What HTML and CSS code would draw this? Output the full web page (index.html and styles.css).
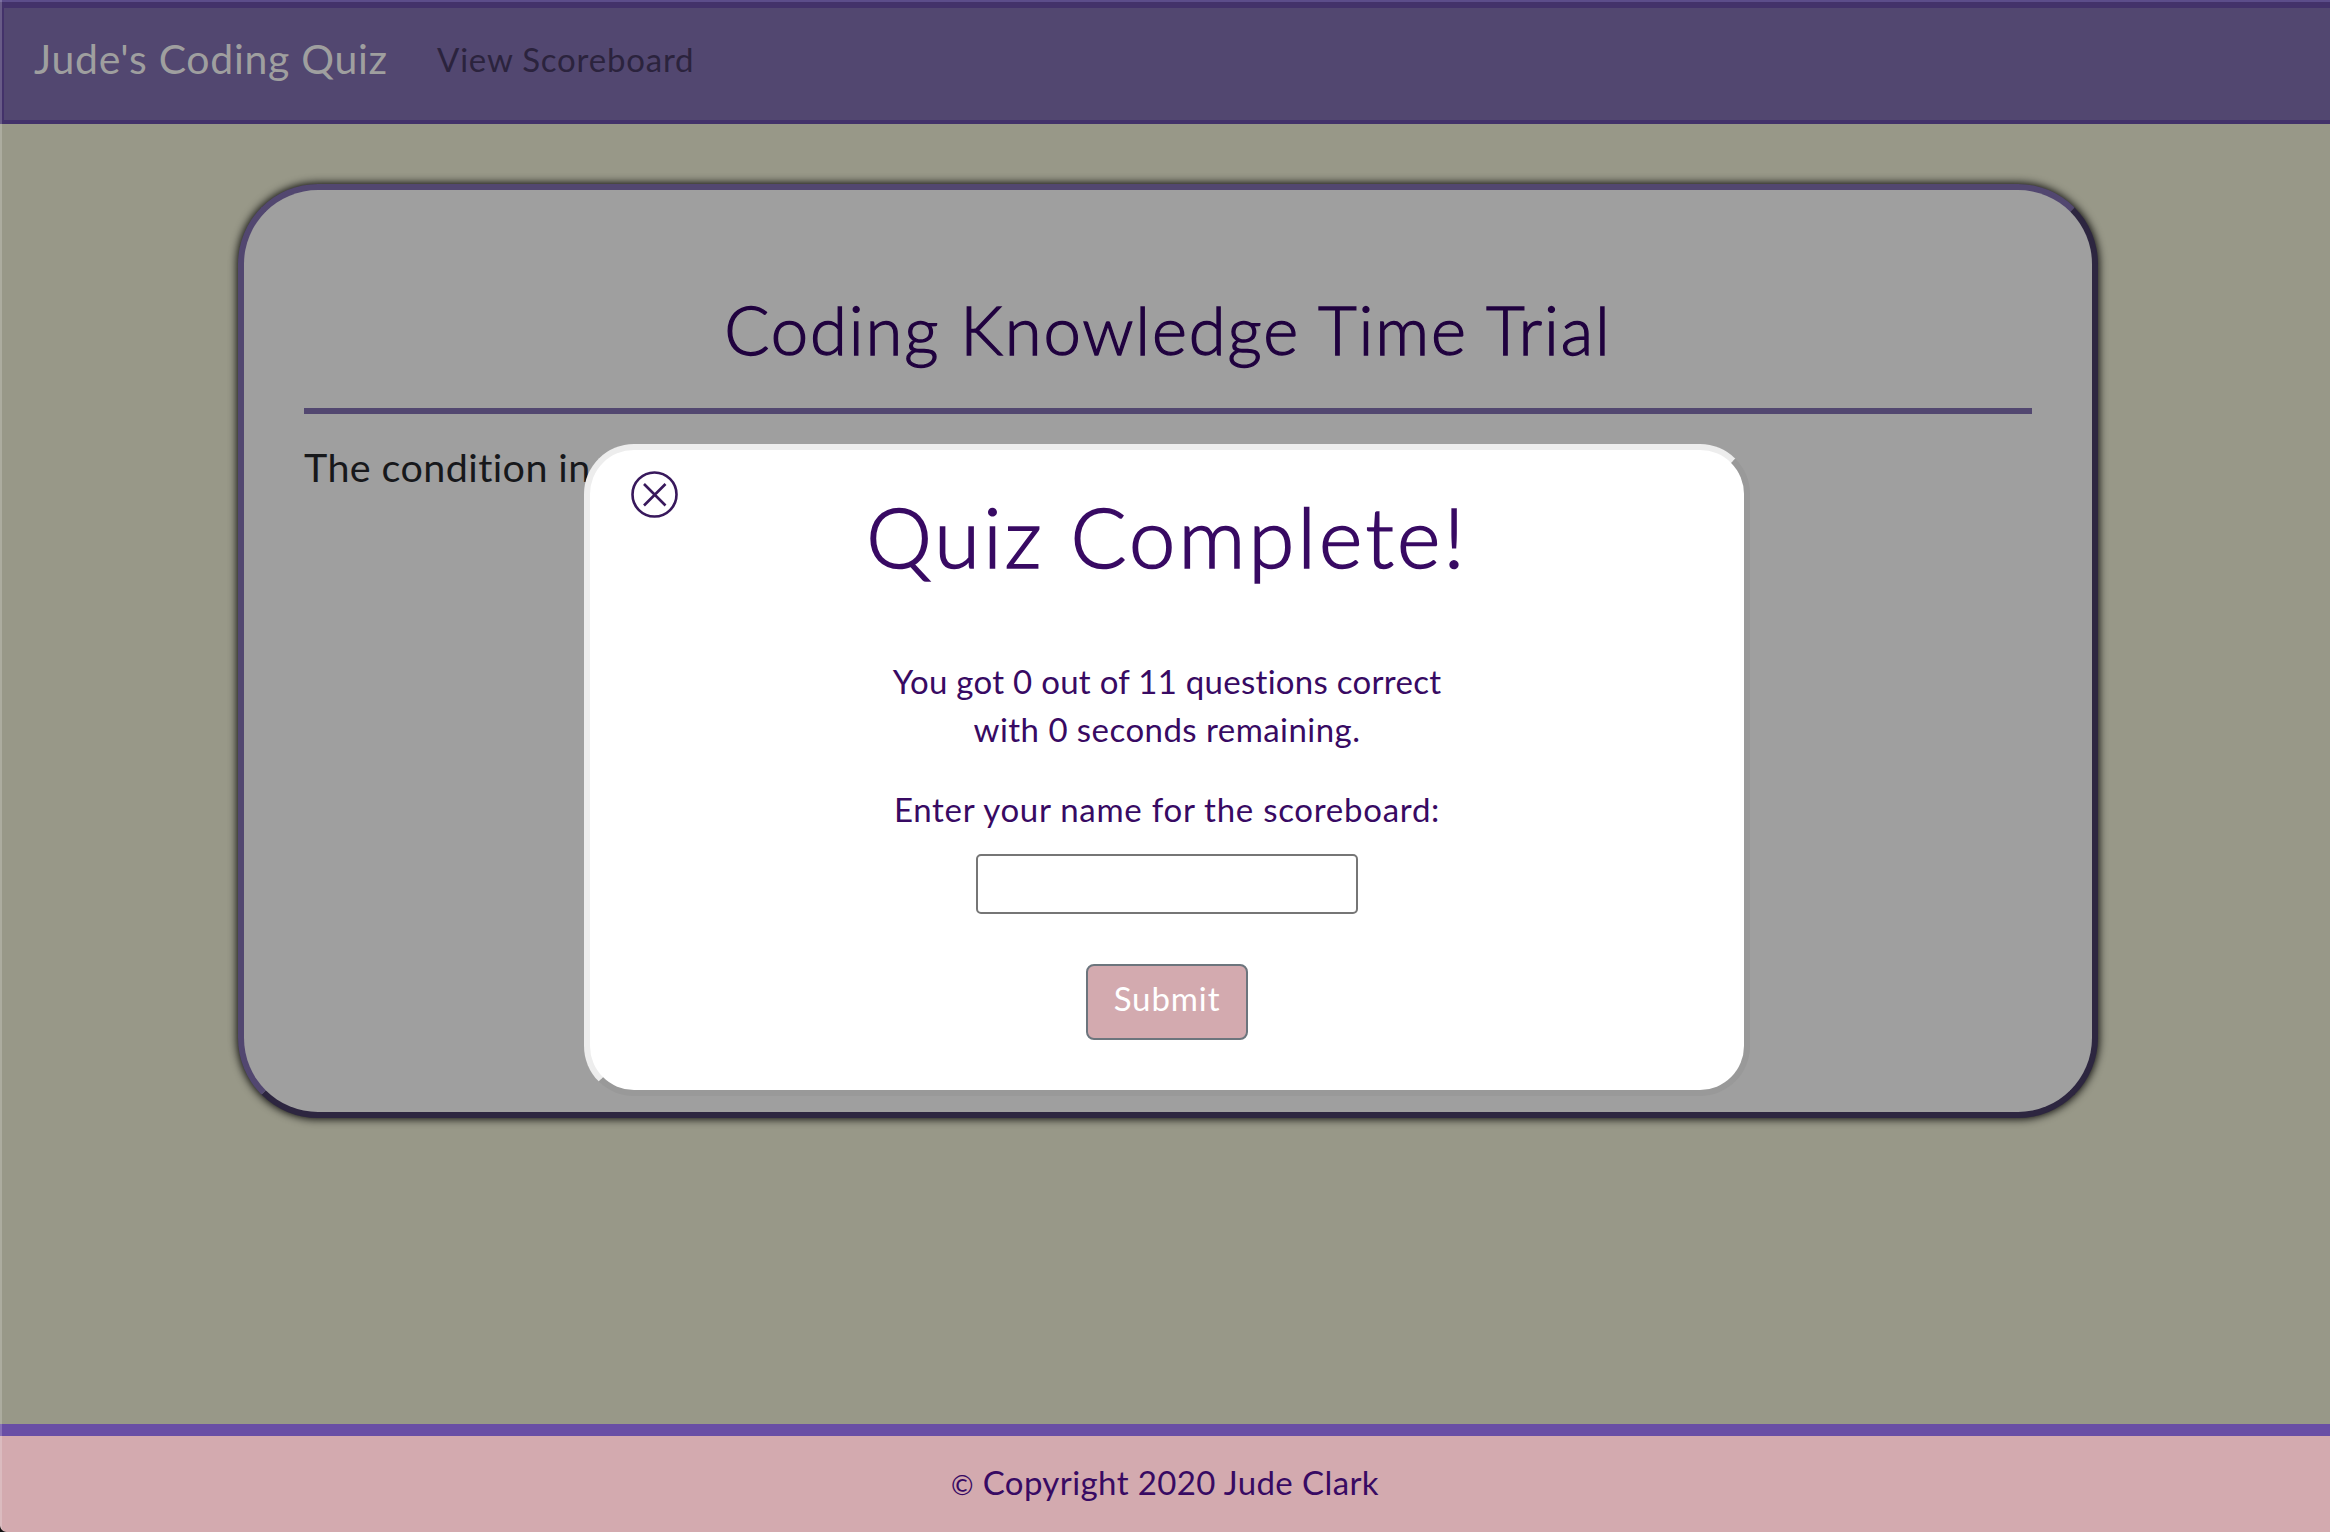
FILE: index.html
```html
<!DOCTYPE html>
<html lang="en">
<head>
<meta charset="utf-8">
<title>Jude's Coding Quiz</title>
<link rel="stylesheet" href="styles.css">
</head>
<body>
<header class="navbar">
  <a class="brand">Jude's Coding Quiz</a>
  <a class="nav-link">View Scoreboard</a>
</header>
<main class="page">
  <section class="card">
    <h1 class="card-title">Coding Knowledge Time Trial</h1>
    <hr class="rule">
    <p class="question">The condition in</p>
  </section>
</main>
<footer class="footer"><span class="copy-sign">©</span> Copyright 2020 Jude Clark</footer>
<div class="modal" role="dialog">
  <svg class="close" viewBox="0 0 48 48" aria-label="Close">
    <circle cx="23.5" cy="23.5" r="22" />
    <path d="M13 13 34.500 34.500M34.500 13 13 34.500" />
  </svg>
  <h2 class="modal-title">Quiz Complete!</h2>
  <p class="result">You got 0 out of 11 questions correct<br><span class="result-time">with 0 seconds remaining.</span></p>
  <label class="name-label" for="name">Enter your name for the scoreboard:</label>
  <input class="name-input" id="name" type="text">
  <button class="submit" type="button">Submit</button>
</div>
</body>
</html>
```
FILE: styles.css
```css
* { box-sizing: border-box; }

body {
  margin: 0;
  height: 1532px;
  display: flex;
  flex-direction: column;
  position: relative;
  overflow: hidden;
  background: #989888;
  color: #380a63;
  font-family: Lato, "Open Sans", sans-serif;
  font-size: 33px;
  line-height: 48px;
  font-variant-ligatures: none;
}

h1, h2, p { margin: 0; font-weight: 400; }

/* window edge highlight and rounded lower corner */
body::before {
  content: "";
  position: absolute;
  inset: 0 auto 0 0;
  width: 2px;
  background: rgba(255, 255, 255, .2);
  z-index: 1;
}
body::after {
  content: "";
  position: absolute;
  left: 0;
  bottom: 0;
  width: 7px;
  height: 7px;
  background: radial-gradient(circle at 100% 0, transparent 6.5px, #111 7.5px);
  z-index: 2;
}

.navbar {
  flex: none;
  height: 124px;
  display: flex;
  align-items: flex-start;
  padding: 12px 30px 0 34px;
  background: #524770;
  border: solid #43326a;
  border-width: 8px 0 4px;
  box-shadow: inset 4px 0 #43326a;
  position: relative;
}
.navbar::before {
  content: "";
  position: absolute;
  left: 0;
  right: 0;
  top: -8px;
  height: 2px;
  background: #5c4d8a;
}
.brand {
  width: 403px;
  padding-top: 9px;
  font-size: 41px;
  line-height: 60px;
  letter-spacing: .7px;
  color: #9f9f9f;
  white-space: nowrap;
}
.nav-link {
  padding-top: 15px;
  letter-spacing: .8px;
  color: #2b233d;
}

.page {
  flex: 1;
  padding: 60px 232px 0 238px;
}
.card {
  height: 934px;
  padding: 90px 60px 0;
  border: 6px solid;
  border-color: #524770 #2d2640 #2d2640 #524770;
  border-radius: 80px;
  background: #9f9f9f;
  box-shadow: 0 0 9px 1px rgba(0, 0, 0, .95);
}
.card-title {
  height: 128px;
  font-size: 67px;
  font-weight: 300;
  line-height: 98px;
  letter-spacing: 1.85px;
  text-align: center;
  color: #20023f;
  -webkit-text-stroke: 1.3px #20023f;
}
.rule {
  height: 6px;
  margin: 0;
  border: 0;
  background: #524770;
}
.question {
  padding-top: 23px;
  font-size: 39.5px;
  line-height: 60px;
  letter-spacing: .4px;
  color: #17181b;
}

.footer {
  flex: none;
  height: 108px;
  padding-top: 22px;
  border-top: 12px solid #694ea5;
  background: #d3aaaf;
  text-align: center;
  letter-spacing: .4px;
}
.copy-sign {
  font-size: 27px;
  line-height: 1;
}

.modal {
  position: absolute;
  left: 584px;
  top: 444px;
  width: 1166px;
  height: 652px;
  display: flex;
  flex-direction: column;
  align-items: center;
  border: 6px solid;
  border-color: #ededed #999 #999 #ededed;
  border-radius: 50px;
  background: #fff;
  text-align: center;
}
.close {
  position: absolute;
  left: 41px;
  top: 21px;
  width: 48px;
  height: 48px;
  fill: none;
  stroke: #38185c;
  stroke-width: 2.6;
}
.modal-title {
  padding-top: 36px;
  height: 207px;
  font-size: 83px;
  font-weight: 300;
  line-height: 100px;
  letter-spacing: 3.2px;
  -webkit-text-stroke: 1.6px #380a63;
}
.result { height: 128px; letter-spacing: .28px; }
.result-time { letter-spacing: .45px; }
.name-label { height: 69px; letter-spacing: .73px; }
.name-input {
  width: 382px;
  height: 60px;
  margin: 0 0 50px;
  border: 2px solid #767676;
  border-radius: 5px;
  background: #fff;
}
.submit {
  width: 162px;
  height: 76px;
  padding: 0 0 8px;
  border: 2px solid #6c757d;
  border-radius: 8px;
  background: #d3aaaf;
  color: #fff;
  font: inherit;
  letter-spacing: .9px;
}
```
